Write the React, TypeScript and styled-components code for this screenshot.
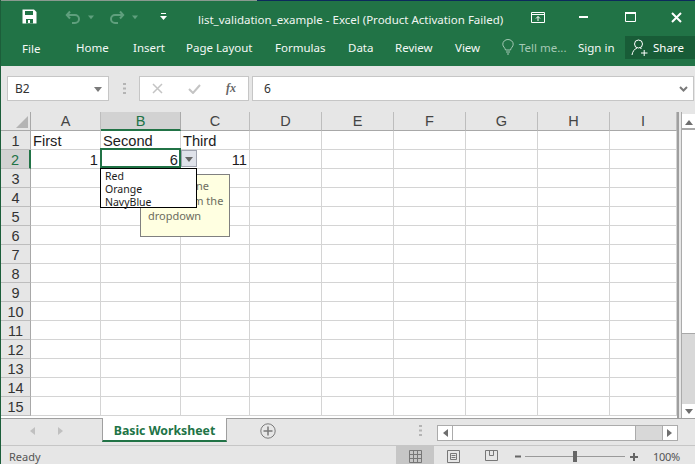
import React from 'react';
import styled, { createGlobalStyle } from 'styled-components';

const UI_FONT = '"Noto Sans", "Open Sans", sans-serif';
const CELL_FONT = '"Liberation Sans", Arial, sans-serif';
const GREEN = '#217346';

const GlobalStyle = createGlobalStyle`
  html, body { margin: 0; padding: 0; background: #e6e6e6; overflow: hidden; }
  * { box-sizing: border-box; }
`;

const Window = styled.div`
  position: relative;
  width: 695px;
  height: 464px;
  display: flex;
  flex-direction: column;
  overflow: hidden;
  background: #e6e6e6;
  border-left: 1px solid #1c5e3a;
  font-family: ${UI_FONT};
`;

const TopStrip = styled.div`
  height: 1px;
  background: linear-gradient(to right, #8a9a90 0, #8a9a90 256px, #0c2a5c 256px, #0c2a5c 100%);
`;

const TitleBar = styled.div`
  height: 35px;
  background: ${GREEN};
  display: flex;
  align-items: center;
  color: #fff;
  padding-left: 21px;
`;

const Qat = styled.div`
  display: flex;
  align-items: center;
  width: 176px;
  height: 100%;
  padding-bottom: 4px;
`;

const QatButton = styled.span<{ $w: number }>`
  display: flex;
  align-items: center;
  gap: 7px;
  width: ${p => p.$w}px;
`;

const Title = styled.div`
  width: 320px;
  font-size: 11.5px;
  white-space: nowrap;
  color: #f0f5f2;
  padding-top: 2px;
`;

const WindowButtons = styled.div`
  display: flex;
  align-items: center;
  height: 100%;
  padding: 0 0 3px 13px;
`;

const WinButton = styled.span<{ $gap: number }>`
  display: flex;
  margin-left: ${p => p.$gap}px;
`;

const Ribbon = styled.div`
  height: 30px;
  background: ${GREEN};
  display: flex;
  align-items: center;
  color: #fff;
  font-size: 11.5px;
  padding-bottom: 8px;
`;

const RibbonTab = styled.span<{ $w: number; $muted?: boolean }>`
  width: ${p => p.$w}px;
  white-space: nowrap;
  color: ${p => (p.$muted ? '#a5c9b5' : '#f4f8f6')};
  display: flex;
  align-items: center;
  gap: 5px;
`;

const FileTab = styled(RibbonTab)`
  padding: 2px 0 0 21px;
`;

const ShareButton = styled.div`
  margin-left: auto;
  width: 70px;
  height: 23px;
  background: #185c37;
  display: flex;
  align-items: center;
  gap: 5px;
  padding-left: 6px;
`;

const FormulaBar = styled.div`
  height: 46px;
  display: flex;
  align-items: flex-start;
  padding: 10px 1px 0 6px;
  background: #e6e6e6;
`;

const Box = styled.div<{ $w?: number }>`
  height: 25px;
  background: #fff;
  border: 1px solid #c6c6c6;
  display: flex;
  align-items: center;
  font-size: 12px;
  color: #333;
  ${p => (p.$w ? `width: ${p.$w}px;` : 'flex: 1;')}
`;

const NameBox = styled(Box)`
  justify-content: space-between;
  padding: 0 6px 0 7px;
`;

const Grip = styled.div`
  width: 30px;
  height: 25px;
  display: flex;
  justify-content: center;
  align-items: center;
`;

const FxBox = styled(Box)`
  margin-right: 3px;
  padding-left: 12px;
  gap: 25px;
`;

const FxLabel = styled.span`
  font-family: "Liberation Serif", serif;
  font-style: italic;
  font-weight: 700;
  font-size: 12px;
  color: #666;
`;

const FormulaInput = styled(Box)`
  justify-content: space-between;
  padding: 0 5px 0 11px;
`;

const SheetArea = styled.div`
  height: 306px;
  display: flex;
  gap: 2px;
`;

const Sheet = styled.div`
  position: relative;
  width: 678px;
  height: 100%;
  display: grid;
  grid-template-columns: 30px 70px 80px 69px 72px 72px 72px 72px 72px 67px;
  grid-template-rows: 19px repeat(15, 19px) 2px;
  background: #fff;
  border-right: 2px solid #9f9f9f;
`;

const Corner = styled.div`
  background: #e6e6e6;
  border-right: 1px solid #a8a8a8;
  border-bottom: 1px solid #a8a8a8;
  display: flex;
  align-items: flex-end;
  justify-content: flex-end;
  padding: 0 2px 2px 0;
`;

const ColHead = styled.div<{ $active?: boolean }>`
  background: ${p => (p.$active ? '#d2d2d2' : '#e6e6e6')};
  color: ${p => (p.$active ? GREEN : '#444')};
  border-right: 1px solid ${p => (p.$active ? '#aaa' : '#bdbdbd')};
  border-bottom: ${p => (p.$active ? `2px solid ${GREEN}` : '1px solid #a8a8a8')};
  font: 14.5px ${CELL_FONT};
  text-align: center;
  line-height: 18px;
`;

const RowHead = styled.div<{ $active?: boolean }>`
  background: ${p => (p.$active ? '#d2d2d2' : '#e6e6e6')};
  color: ${p => (p.$active ? GREEN : '#333')};
  border-right: ${p => (p.$active ? `2px solid ${GREEN}` : '1px solid #a8a8a8')};
  border-bottom: 1px solid #bdbdbd;
  font: 14.5px ${CELL_FONT};
  text-align: center;
  line-height: 20px;
`;

const Cell = styled.div<{ $right?: boolean }>`
  border-right: 1px solid #d4d4d4;
  border-bottom: 1px solid #d4d4d4;
  font: 14.67px ${CELL_FONT};
  color: #1c1c1c;
  line-height: 20px;
  padding: 0 2px;
  white-space: nowrap;
  text-align: ${p => (p.$right ? 'right' : 'left')};
`;

const Selection = styled.div`
  position: absolute;
  left: 99px;
  top: 36px;
  width: 81px;
  height: 20px;
  border: 2px solid ${GREEN};
  pointer-events: none;
`;

const ListButton = styled.div`
  position: absolute;
  left: 180px;
  top: 38px;
  width: 16px;
  height: 17px;
  background: #dfe2ea;
  border: 1px solid #a0a4b0;
  display: flex;
  align-items: center;
  justify-content: center;
`;

const Dropdown = styled.div`
  position: absolute;
  z-index: 3;
  left: 99px;
  top: 56px;
  width: 97px;
  height: 40px;
  background: #fff;
  border: 1px solid #000;
  padding: 1px 0 0 4px;
  font-size: 10.5px;
  line-height: 13px;
  color: #1a1a1a;
`;

const InputTip = styled.div`
  position: absolute;
  z-index: 2;
  left: 139px;
  top: 62px;
  width: 90px;
  height: 63px;
  background: #ffffe1;
  border: 1px solid #808080;
  padding: 3px 0 0 7px;
  font-size: 11px;
  line-height: 15px;
  color: #6d6d5f;
  white-space: nowrap;
`;

const VScroll = styled.div`
  width: 14px;
  display: flex;
  flex-direction: column;
  padding-top: 2px;
  border-left: 1px solid #ababab;
`;

const VButton = styled.div`
  height: 14px;
  background: #fff;
  display: flex;
  align-items: center;
  justify-content: center;
`;

const VThumb = styled.div`
  height: 206px;
  background: #fff;
  border-top: 2px solid #a8a8a8;
  border-bottom: 1px solid #a8a8a8;
`;

const VTrack = styled.div`
  flex: 1;
  background: #d8d8d8;
`;

const TabBar = styled.div`
  height: 28px;
  display: flex;
  background: #e6e6e6;
  border-top: 1px solid #9f9f9f;
  border-bottom: 1px solid #c6c6c6;
`;

const TabNav = styled.div`
  width: 101px;
  display: flex;
  align-items: center;
  padding: 0 0 3px 27px;
  gap: 21px;
`;

const SheetTab = styled.div`
  width: 125px;
  height: 24px;
  margin-top: -1px;
  background: #fff;
  border-left: 1px solid #9f9f9f;
  border-right: 1px solid #9f9f9f;
  border-bottom: 2px solid ${GREEN};
  color: ${GREEN};
  font-size: 12.3px;
  font-weight: 700;
  text-align: center;
  line-height: 26px;
`;

const AddSheet = styled.div`
  width: 190px;
  display: flex;
  align-items: center;
  padding: 0 0 3px 33px;
`;

const TabGrip = styled.div`
  width: 20px;
  display: flex;
  align-items: center;
  justify-content: flex-end;
  padding: 0 15px 3px 0;
`;

const HScroll = styled.div`
  margin-top: 6px;
  width: 241px;
  height: 16px;
  display: flex;
  background: #d8d8d8;
  border: 1px solid #ababab;
`;

const HButton = styled.div`
  width: 14px;
  background: #fff;
  display: flex;
  align-items: center;
  justify-content: center;
`;

const HThumb = styled.div`
  width: 184px;
  background: #fff;
  border-left: 1px solid #ababab;
  border-right: 1px solid #ababab;
`;

const HTrack = styled.div`
  flex: 1;
  border-right: 1px solid #ababab;
`;

const StatusBar = styled.div`
  height: 18px;
  display: flex;
  align-items: center;
  background: #e6e6e6;
  font-size: 11px;
  color: #555;
`;

const Ready = styled.span`
  width: 395px;
  padding: 3px 0 0 8px;
`;

const ViewButton = styled.div<{ $active?: boolean }>`
  width: 38px;
  height: 18px;
  padding-top: 2px;
  background: ${p => (p.$active ? '#c6c6c6' : 'transparent')};
  display: flex;
  align-items: center;
  justify-content: center;
`;

const Zoom = styled.div`
  display: flex;
  align-items: center;
  margin-left: 5px;
  padding-top: 3px;
`;

const ZoomTrack = styled.div`
  position: relative;
  width: 100px;
  height: 1px;
  margin: 0 5px 0 4px;
  background: #9a9a9a;
`;

const ZoomThumb = styled.span`
  position: absolute;
  left: 48px;
  top: -5px;
  width: 4px;
  height: 11px;
  background: #666;
`;

const ZoomPercent = styled.span`
  margin-left: 15px;
  padding-top: 3px;
  font-size: 11px;
  color: #555;
  letter-spacing: -0.3px;
`;

const Tri = ({ dir, color = '#6e6e6e', size = 4 }: { dir: 'up' | 'down' | 'left' | 'right'; color?: string; size?: number }) => {
  const paths = { up: 'M0 8 H8 L4 3 Z', down: 'M0 2 H8 L4 7 Z', left: 'M7 0 V8 L2 4 Z', right: 'M1 0 V8 L6 4 Z' };
  return (
    <svg width={size * 2} height={size * 2} viewBox="0 0 8 8">
      <path d={paths[dir]} fill={color} />
    </svg>
  );
};

const Dots = () => (
  <svg width="3" height="11" viewBox="0 0 3 11">
    <path d="M0 0h3v2H0zM0 4.5h3v2H0zM0 9h3v2H0z" fill="#b4b4b4" />
  </svg>
);

const columns = ['A', 'B', 'C', 'D', 'E', 'F', 'G', 'H', 'I'];
const rows = Array.from({ length: 15 }, (_, i) => i + 1);
const values: Record<string, string> = { A1: 'First', B1: 'Second', C1: 'Third', A2: '1', B2: '6', C2: '11' };

export default function App() {
  return (
    <Window>
      <GlobalStyle />
      <TopStrip />
      <TitleBar>
        <Qat>
          <QatButton $w={43}>
            <svg width="15" height="15" viewBox="0 0 15 15">
              <path d="M0.5 0.5h11.5l2.5 2.5v11.5h-14z" fill="#fff" />
              <path d="M3 2h8v4H3z" fill={GREEN} />
              <path d="M4 10h7v4.500H4z" fill={GREEN} />
              <path d="M6 11h2v3H6z" fill="#fff" />
            </svg>
          </QatButton>
          <QatButton $w={44}>
            <svg width="16" height="14" viewBox="0 0 16 14" fill="none" stroke="#5f9f7d" strokeWidth="2">
              <path d="M5 1.500 1.800 5 5 8.500M2 5h8a4 4 0 0 1 0 8H7" />
            </svg>
            <Tri dir="down" color="#5f9f7d" size={3} />
          </QatButton>
          <QatButton $w={51}>
            <svg width="16" height="14" viewBox="0 0 16 14" fill="none" stroke="#5f9f7d" strokeWidth="2">
              <path d="M11 1.500 14.200 5 11 8.500M14 5H6a4 4 0 0 0 0 8h3" />
            </svg>
            <Tri dir="down" color="#5f9f7d" size={3} />
          </QatButton>
          <QatButton $w={20}>
            <svg width="7" height="8" viewBox="0 0 7 8">
              <path d="M1 0h5v1H1zM0 3h7L3.500 7z" fill="#fff" />
            </svg>
          </QatButton>
        </Qat>
        <Title>list_validation_example - Excel (Product Activation Failed)</Title>
        <WindowButtons>
          <WinButton $gap={0}>
            <svg width="14" height="11" viewBox="0 0 14 11" fill="none" stroke="#fff">
              <path d="M.5.500h13v10H.5zM.5 2.500h13" />
              <path d="M7 9V4.500M5 6.500l2-2 2 2" />
            </svg>
          </WinButton>
          <WinButton $gap={34}>
            <svg width="9" height="3" viewBox="0 0 9 3">
              <path d="M0 0h9v2H0z" fill="#fff" />
            </svg>
          </WinButton>
          <WinButton $gap={37}>
            <svg width="11" height="10" viewBox="0 0 11 10" fill="none" stroke="#fff">
              <path d="M.5.500h10v9H.5z" />
              <path d="M0 1h11" strokeWidth="2" />
            </svg>
          </WinButton>
          <WinButton $gap={35}>
            <svg width="11" height="11" viewBox="0 0 11 11" stroke="#fff" strokeWidth="2">
              <path d="M1 1l9 9M10 1l-9 9" />
            </svg>
          </WinButton>
        </WindowButtons>
      </TitleBar>
      <Ribbon>
        <FileTab $w={75}>File</FileTab>
        <RibbonTab $w={57}>Home</RibbonTab>
        <RibbonTab $w={53}>Insert</RibbonTab>
        <RibbonTab $w={89}>Page Layout</RibbonTab>
        <RibbonTab $w={73}>Formulas</RibbonTab>
        <RibbonTab $w={47}>Data</RibbonTab>
        <RibbonTab $w={60}>Review</RibbonTab>
        <RibbonTab $w={47}>View</RibbonTab>
        <RibbonTab $w={76} $muted>
          <svg width="12" height="16" viewBox="0 0 12 16" fill="none" stroke="#a5c9b5">
            <path d="M3.500 11C3 8.500.8 7.800.8 5.200a5.200 4.700 0 0 1 10.400 0C11.200 7.800 9 8.500 8.500 11zM4 13h4M5 15h2" />
          </svg>
          Tell me...
        </RibbonTab>
        <RibbonTab $w={47}>Sign in</RibbonTab>
        <ShareButton>
          <svg width="17" height="17" viewBox="0 0 17 17" fill="none" stroke="#fff">
            <circle cx="7.500" cy="5" r="4" />
            <path d="M1 16c.5-3.500 2.500-6 5-7M9 9l1.500.5M10 14h6.500M13.200 11v6" />
          </svg>
          Share
        </ShareButton>
      </Ribbon>
      <FormulaBar>
        <NameBox $w={102}>
          B2
          <Tri dir="down" color="#7a7a7a" size={4} />
        </NameBox>
        <Grip><Dots /></Grip>
        <FxBox $w={110}>
          <svg width="11" height="11" viewBox="0 0 11 11" stroke="#c4c4c4" strokeWidth="1.500">
            <path d="M1 1l9 9M10 1l-9 9" />
          </svg>
          <svg width="13" height="11" viewBox="0 0 13 11" fill="none" stroke="#c4c4c4" strokeWidth="2">
            <path d="M1 6l4 4 7-8" />
          </svg>
          <FxLabel>fx</FxLabel>
        </FxBox>
        <FormulaInput>
          6
          <svg width="9" height="6" viewBox="0 0 9 6" fill="none" stroke="#7a7a7a" strokeWidth="2">
            <path d="M1 1l3.500 3.500L8 1" />
          </svg>
        </FormulaInput>
      </FormulaBar>
      <SheetArea>
        <Sheet>
          <Corner>
            <svg width="12" height="12" viewBox="0 0 12 12">
              <path d="M12 0v12H0z" fill="#b4b4b4" />
            </svg>
          </Corner>
          {columns.map(c => (
            <ColHead key={c} $active={c === 'B'}>{c}</ColHead>
          ))}
          {rows.map(r => (
            <React.Fragment key={r}>
              <RowHead $active={r === 2}>{r}</RowHead>
              {columns.map(c => (
                <Cell key={c} $right={r === 2}>{values[`${c}${r}`]}</Cell>
              ))}
            </React.Fragment>
          ))}
          <Selection />
          <ListButton><Tri dir="down" color="#666" /></ListButton>
          <InputTip>
            Choose one
            <br />
            value from the
            <br />
            dropdown
          </InputTip>
          <Dropdown>
            <div>Red</div>
            <div>Orange</div>
            <div>NavyBlue</div>
          </Dropdown>
        </Sheet>
        <VScroll>
          <VButton><Tri dir="up" /></VButton>
          <VThumb />
          <VTrack />
          <VButton><Tri dir="down" /></VButton>
        </VScroll>
      </SheetArea>
      <TabBar>
        <TabNav>
          <Tri dir="left" color="#c0c0c0" size={4} />
          <Tri dir="right" color="#c0c0c0" size={4} />
        </TabNav>
        <SheetTab>Basic Worksheet</SheetTab>
        <AddSheet>
          <svg width="16" height="16" viewBox="0 0 16 16" fill="none" stroke="#7a7a7a">
            <circle cx="8" cy="8" r="7.200" />
            <path d="M8 3.500v9M3.500 8h9" strokeWidth="1.500" />
          </svg>
        </AddSheet>
        <TabGrip><Dots /></TabGrip>
        <HScroll>
          <HButton><Tri dir="left" size={4} /></HButton>
          <HThumb />
          <HTrack />
          <HButton><Tri dir="right" size={4} /></HButton>
        </HScroll>
      </TabBar>
      <StatusBar>
        <Ready>Ready</Ready>
        <ViewButton $active>
          <svg width="13" height="13" viewBox="0 0 13 13" fill="none" stroke="#777">
            <path d="M.5.500h12v12H.5zM4.500.500v12M8.500.500v12M.5 4.500h12M.5 8.500h12" />
          </svg>
        </ViewButton>
        <ViewButton>
          <svg width="13" height="13" viewBox="0 0 13 13" fill="none" stroke="#777">
            <path d="M.5.500h12v12H.5zM3.500 3.500h6v6h-6zM4.500 5.500h4M4.500 7.500h4" />
          </svg>
        </ViewButton>
        <ViewButton>
          <svg width="13" height="13" viewBox="0 0 13 13" fill="none" stroke="#777">
            <path d="M.5.500h12v10H.5zM4.500.500v5h4v-5" />
          </svg>
        </ViewButton>
        <Zoom>
          <svg width="6" height="7" viewBox="0 0 6 7"><path d="M0 2.500h6v2H0z" fill="#666" /></svg>
          <ZoomTrack><ZoomThumb /></ZoomTrack>
          <svg width="8" height="8" viewBox="0 0 8 8"><path d="M0 3h8v2H0zM3 0h2v8H3z" fill="#666" /></svg>
        </Zoom>
        <ZoomPercent>100%</ZoomPercent>
      </StatusBar>
    </Window>
  );
}
